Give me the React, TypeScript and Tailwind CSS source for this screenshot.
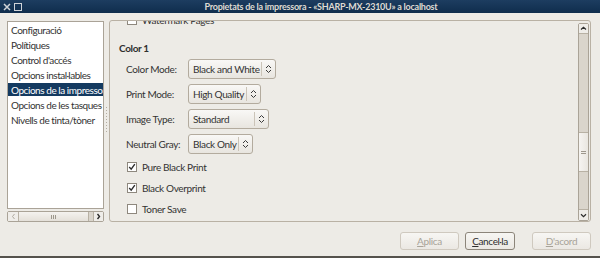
import React from 'react';

const menuItems = [
  'Configuració',
  'Polítiques',
  "Control d'accés",
  'Opcions instal·lables',
  'Opcions de la impressora',
  'Opcions de les tasques',
  'Nivells de tinta/tòner',
];

function UpDown() {
  return (
    <svg width="7" height="10" viewBox="0 0 7 10" fill="none" stroke="#3a3a3a" strokeWidth="1">
      <path d="M1 4 L3.5 1.5 L6 4" />
      <path d="M1 6 L3.5 8.5 L6 6" />
    </svg>
  );
}

function Combo({ value, className }: { value: string; className: string }) {
  return (
    <div
      className={`flex h-[20px] items-center rounded-[3px] border border-[#b3ab9e] bg-gradient-to-b from-[#f9f8f6] to-[#e8e5df] ${className}`}
    >
      <span className="flex-1 whitespace-nowrap pl-[4px] text-[#333]">{value}</span>
      <span className="h-[14px] w-px bg-[#cbc4b8]" />
      <span className="flex w-[13px] justify-center">
        <UpDown />
      </span>
    </div>
  );
}

function Check({ checked, label }: { checked: boolean; label: string }) {
  return (
    <div className="flex h-[21px] items-center pl-[8px]">
      <span className="flex h-[10px] w-[10px] items-center justify-center border border-[#8e887e] bg-white">
        {checked && (
          <svg width="8" height="8" viewBox="0 0 8 8" fill="none" stroke="#2d2d2d" strokeWidth="1.4">
            <path d="M1.2 4 L3.2 6.2 L6.8 1.2" />
          </svg>
        )}
      </span>
      <span className="ml-[5px] text-[#333]">{label}</span>
    </div>
  );
}

function ComboRow({ label, value, className }: { label: string; value: string; className: string }) {
  return (
    <div className="flex h-[25px] items-center pl-[7px]">
      <span className="w-[62px] text-[#333]">{label}</span>
      <Combo value={value} className={className} />
    </div>
  );
}

function Button({ mnemonic, rest, disabled, className }: { mnemonic: string; rest: string; disabled?: boolean; className: string }) {
  return (
    <div
      className={`flex h-[18px] items-center justify-center rounded-[3px] border bg-gradient-to-b from-[#f7f6f3] to-[#ebe8e3] ${
        disabled ? 'border-[#cfc9bf] text-[#a8a398]' : 'border-[#8c857a] text-[#2e2e2e]'
      } ${className}`}
    >
      <span className="underline underline-offset-[1px]">{mnemonic}</span>
      {rest}
    </div>
  );
}

export default function App() {
  return (
    <div className="flex h-[258px] w-[600px] flex-col overflow-hidden border-b-2 border-[#55524c] bg-[#edebe6] font-[Lato,sans-serif] text-[10px] leading-none tracking-[-0.35px] text-[#3c3c3c]">
      {/* title bar */}
      <div className="flex h-[13px] items-center bg-gradient-to-b from-[#1d3d60] to-[#0f2d4d]">
        <div className="flex w-[24px] items-center gap-[3px] pl-[3px]">
          <svg width="8" height="8" viewBox="0 0 8 8" stroke="#cfd3d8" strokeWidth="1.5">
            <path d="M1 1 L7 7 M7 1 L1 7" />
          </svg>
          <span className="h-[8px] w-[8px] border-[1.5px] border-[#cfd3d8]" />
        </div>
        <div className="flex-1 pl-[18px] text-center text-[9px] font-bold tracking-[-0.25px] text-[#dedad2]">
          Propietats de la impressora - «SHARP-MX-2310U» a localhost
        </div>
      </div>

      <div className="flex pl-[7px] pt-[7px]">
        {/* sidebar */}
        <div className="mt-[1px] flex w-[97px] flex-col">
          <div className="h-[188px] overflow-hidden border border-[#aaa397] bg-white pt-[1px] tracking-[-0.45px]">
            {menuItems.map((item, i) => (
              <div
                key={item}
                className={`mb-[2px] flex h-[13px] items-center whitespace-nowrap pl-[3px] ${
                  i === 4 ? 'bg-[#143a60] text-white' : 'text-[#333]'
                }`}
              >
                {item}
              </div>
            ))}
          </div>
          <div className="mt-[2px] flex h-[11px] rounded-[2px] border border-[#aaa397] bg-[#dad5cc]">
            <div className="flex w-[11px] items-center justify-center border-r border-[#b8b1a4] bg-[#efede9]">
              <svg width="5" height="7" viewBox="0 0 5 7" fill="none" stroke="#b0aaa0" strokeWidth="1">
                <path d="M3.5 1 L1.5 3.5 L3.5 6" />
              </svg>
            </div>
            <div className="flex w-[70px] items-center justify-center gap-[1px] border-r border-[#b8b1a4] bg-gradient-to-b from-[#f4f2ef] to-[#e4e0d9]">
              <span className="h-[4px] w-px bg-[#9d978c]" />
              <span className="h-[4px] w-px bg-[#9d978c]" />
              <span className="h-[4px] w-px bg-[#9d978c]" />
            </div>
            <div className="flex-1" />
            <div className="flex w-[10px] items-center justify-center border-l border-[#b8b1a4] bg-[#efede9]">
              <svg width="5" height="7" viewBox="0 0 5 7" fill="none" stroke="#2c2c2c" strokeWidth="1.4">
                <path d="M1.5 1 L3.5 3.5 L1.5 6" />
              </svg>
            </div>
          </div>
        </div>

        {/* pane handle */}
        <div className="flex w-[5px] flex-col items-center justify-center gap-[2px] pb-[4px]">
          {Array.from({ length: 9 }).map((_, i) => (
            <span key={i} className="h-px w-px bg-[#b3ada2]" />
          ))}
        </div>

        {/* options panel */}
        <div className="flex h-[202px] w-[482px] rounded-[3px] border border-[#b9b1a4]">
          <div className="flex-1 overflow-hidden">
            <div className="-mt-[12px] pl-[9px]">
              <Check checked={false} label="Watermark Pages" />
              <div className="mt-[10px] flex h-[16px] items-center font-bold text-[#2f2f2f]">Color 1</div>
              <ComboRow label="Color Mode:" value="Black and White" className="w-[88px]" />
              <ComboRow label="Print Mode:" value="High Quality" className="w-[73px]" />
              <ComboRow label="Image Type:" value="Standard" className="w-[81px]" />
              <ComboRow label="Neutral Gray:" value="Black Only" className="w-[65px]" />
              <Check checked label="Pure Black Print" />
              <Check checked label="Black Overprint" />
              <Check checked={false} label="Toner Save" />
            </div>
          </div>
          <div className="mr-[1px] mt-[2px] flex w-[11px] flex-col rounded-[2px] border border-[#aaa397] bg-[#dad5cc]">
            <div className="flex h-[10px] items-center justify-center border-b border-[#b8b1a4] bg-[#efede9]">
              <svg width="7" height="5" viewBox="0 0 7 5" fill="none" stroke="#2c2c2c" strokeWidth="1.2">
                <path d="M1 3.5 L3.5 1.2 L6 3.5" />
              </svg>
            </div>
            <div className="h-[98px]" />
            <div className="flex h-[40px] flex-col items-center justify-center gap-[1px] border-y border-[#b8b1a4] bg-gradient-to-r from-[#f6f4f1] to-[#e9e6e0]">
              <span className="h-px w-[5px] bg-[#9d978c]" />
              <span className="h-px w-[5px] bg-[#9d978c]" />
            </div>
            <div className="flex-1" />
            <div className="flex h-[11px] items-center justify-center border-t border-[#b8b1a4] bg-[#efede9]">
              <svg width="7" height="5" viewBox="0 0 7 5" fill="none" stroke="#2c2c2c" strokeWidth="1.2">
                <path d="M1 1.2 L3.5 3.6 L6 1.2" />
              </svg>
            </div>
          </div>
        </div>
      </div>

      {/* buttons */}
      <div className="mt-[10px] flex justify-end pr-[9px]">
        <Button mnemonic="A" rest="plica" disabled className="w-[59px]" />
        <Button mnemonic="C" rest="ancel·la" className="ml-[6px] w-[50px]" />
        <Button mnemonic="D" rest="'acord" disabled className="ml-[17px] w-[59px]" />
      </div>
    </div>
  );
}
